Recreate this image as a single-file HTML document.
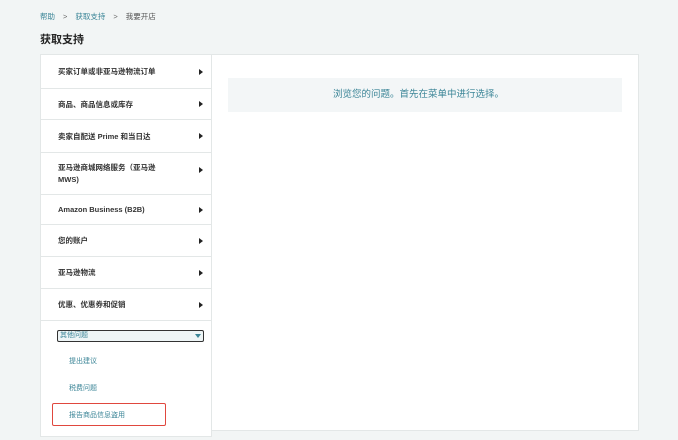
<!DOCTYPE html>
<html><head><meta charset="utf-8"><style>
*{margin:0;padding:0;box-sizing:border-box}
body{width:678px;height:440px;background:#f2f5f5;font-family:"Liberation Sans","Noto Sans CJK SC",sans-serif;position:relative;overflow:hidden}
.a{position:absolute}
.bc{top:11px;left:40px;font-size:7.5px;color:#555}
.bc span.l{color:#3b8597}
.bc i{font-style:normal;margin:0 8px;color:#666}
h1{position:absolute;top:31px;left:40px;font-size:11px;font-weight:bold;color:#222}
.left{left:40px;top:54px;width:172px;height:383px;background:#fff;border:1px solid #e3e7e7}
.right{left:212px;top:54px;width:427px;height:377px;background:#fff;border:1px solid #e3e7e7;border-left:none}
.row{position:absolute;left:0;width:170px;border-bottom:1px solid #e3e7e7;font-size:7.5px;font-weight:bold;color:#333;padding-left:17px;display:flex;align-items:center}
.row:after{content:"";position:absolute;right:8px;top:50%;margin-top:-3px;border-left:4px solid #222;border-top:3px solid transparent;border-bottom:3px solid transparent}
.row.t:after{top:14px;margin-top:0}
.msg{left:228px;top:78px;width:394px;height:34px;background:#f3f6f7;font-size:9.5px;color:#3b8597;line-height:34px;padding-left:105px}
.dd{left:57px;top:330px;width:147px;height:12px;border:1.5px solid #333;border-radius:2px;font-size:7px;color:#3b8597;padding-left:2px;line-height:9px;background:#eef5f6}
.dd:after{content:"";position:absolute;right:2px;top:3px;border-top:4px solid #3b8597;border-left:3px solid transparent;border-right:3px solid transparent}
.sub{left:69px;font-size:7px;color:#3b8597}
.red{left:52px;top:403px;width:114px;height:23px;border:1.5px solid #e0473e;border-radius:2px}
</style></head><body>
<div class="a bc"><span class="l">帮助</span><i>&gt;</i><span class="l">获取支持</span><i>&gt;</i>我要开店</div>
<h1>获取支持</h1>
<div class="a left">
<div class="row" style="top:0;height:34px">买家订单或非亚马逊物流订单</div>
<div class="row" style="top:34px;height:31px">商品、商品信息或库存</div>
<div class="row" style="top:65px;height:33px">卖家自配送 Prime 和当日达</div>
<div class="row t" style="top:98px;height:42px;line-height:12px;padding-right:40px">亚马逊商城网络服务（亚马逊 MWS)</div>
<div class="row" style="top:140px;height:30px">Amazon Business (B2B)</div>
<div class="row" style="top:170px;height:32px">您的账户</div>
<div class="row" style="top:202px;height:32px">亚马逊物流</div>
<div class="row" style="top:234px;height:32px">优惠、优惠券和促销</div>
</div>
<div class="a right"></div>
<div class="a msg">浏览您的问题。首先在菜单中进行选择。</div>
<div class="a dd">其他问题</div>
<div class="a sub" style="top:356px">提出建议</div>
<div class="a sub" style="top:383px">税费问题</div>
<div class="a sub" style="top:410px">报告商品信息盗用</div>
<div class="a red"></div>
</body></html>
